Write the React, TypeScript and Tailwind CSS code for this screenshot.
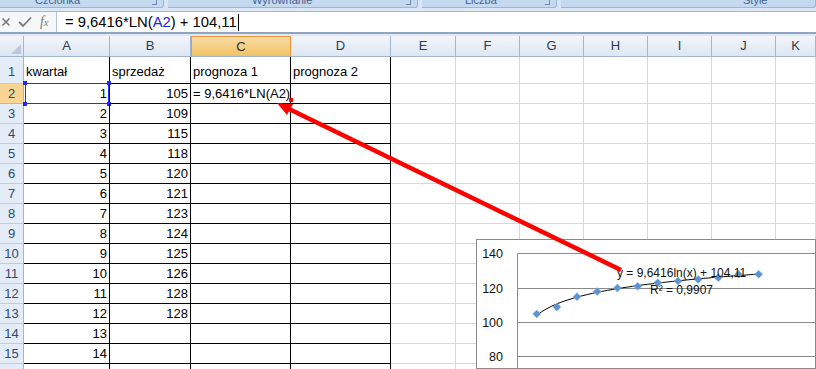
import React from 'react';

const ribbonGroups = [
  { label: 'Czcionka', width: 'w-[164px]', pad: 'pl-[35px]' },
  { label: 'Wyrównanie', width: 'w-[250px]', pad: 'pl-[84px]' },
  { label: 'Liczba', width: 'w-[135px]', pad: 'pl-[43px]' },
  { label: 'Style', width: 'flex-1', pad: 'pl-[182px]' },
];

const columns = [
  { label: 'A', width: 'w-[86px] shrink-0' },
  { label: 'B', width: 'w-[81px] shrink-0' },
  { label: 'C', width: 'w-[100px] shrink-0' },
  { label: 'D', width: 'w-[100px] shrink-0' },
  { label: 'E', width: 'w-[65px] shrink-0' },
  { label: 'F', width: 'w-[64px] shrink-0' },
  { label: 'G', width: 'w-[64px] shrink-0' },
  { label: 'H', width: 'w-[64px] shrink-0' },
  { label: 'I', width: 'w-[64px] shrink-0' },
  { label: 'J', width: 'w-[64px] shrink-0' },
  { label: 'K', width: 'flex-1 min-w-0' },
];

const sales = [105, 109, 115, 118, 120, 121, 123, 124, 125, 126, 128, 128];
const headers = ['kwartał', 'sprzedaż', 'prognoza 1', 'prognoza 2'];

// chart geometry (local to the svg inside the chart frame)
const px = (x: number) => 59.7 + (x - 1) * 20.18;
const py = (v: number) => 13.5 + (140 - v) * 1.725;

const trend = Array.from({ length: 45 }, (_, i) => 1 + i * 0.25)
  .map((x, i) => `${i === 0 ? 'M' : 'L'}${px(x).toFixed(1)},${py(9.6416 * Math.log(x) + 104.11).toFixed(1)}`)
  .join(' ');

const Chart = () => (
  <div className="absolute left-[476px] top-[239px] w-[340px] h-[130px] border border-[#8a8a8a] bg-white">
    <svg width="339" height="129" className="block font-['Liberation_Sans',sans-serif]">
      {[13.5, 48.5, 82.5, 116.5].map((y) => (
        <line key={y} x1="40.5" x2="339" y1={y} y2={y} stroke="#8a8a8a" strokeWidth="1" />
      ))}
      <line x1="40.5" x2="40.5" y1="13.5" y2="129" stroke="#8a8a8a" strokeWidth="1" />
      {['140', '120', '100', '80'].map((t, i) => (
        <text key={t} x="26" y={[18, 52.5, 87, 121][i]} fontSize="12.5" textAnchor="end" fill="#111">
          {t}
        </text>
      ))}
      <path d={trend} fill="none" stroke="#000" strokeWidth="1" />
      {sales.map((v, i) => {
        const x = px(i + 1);
        const y = py(v);
        return (
          <polygon
            key={i}
            points={`${x},${y - 4} ${x + 4},${y} ${x},${y + 4} ${x - 4},${y}`}
            fill="#5b93d3"
            stroke="#8bb3e2"
            strokeWidth="0.6"
          />
        );
      })}
      <text x="140" y="37" fontSize="12" fill="#111">
        y = 9,6416ln(x) + 104,11
      </text>
      <text x="173" y="53.5" fontSize="12" fill="#111">
        R² = 0,9907
      </text>
    </svg>
  </div>
);

const Arrow = () => (
  <svg width="816" height="369" className="absolute inset-0 pointer-events-none">
    <line x1="621" y1="270" x2="289" y2="109" stroke="#ff0000" strokeWidth="4.5" />
    <polygon points="277,103 293,104 287,115" fill="#ff0000" />
    <rect x="289" y="98" width="4" height="4" fill="#ff0000" />
  </svg>
);

const App = () => {
  const rows = Array.from({ length: 16 }, (_, i) => i + 1);

  return (
    <div className="relative w-[816px] h-[369px] overflow-hidden bg-white font-['Liberation_Sans',sans-serif]">
      {/* ribbon group labels, cut off at the top */}
      <div className="h-[8px] flex gap-[4px] bg-[#d9e5f4] overflow-hidden">
        {ribbonGroups.map((g) => (
          <div
            key={g.label}
            className={`${g.width} ${g.pad} h-full relative bg-[#c4d8f0] border-r border-b border-[#9db6d7] rounded-br-[3px] flex`}
          >
            <span className="text-[11px] leading-none text-[#45648f] -mt-[5px]">{g.label}</span>
            {g.label !== 'Style' && (
              <span className="absolute right-[6px] top-0 w-[5px] h-[5px] border-r border-b border-[#6f88ab]" />
            )}
          </div>
        ))}
      </div>
      <div className="h-[3px] bg-[#dce7f5]" />

      {/* formula bar */}
      <div className="h-[23px] flex border-t border-[#a7bad2] border-b-2 border-b-[#8fa4bf] bg-white">
        <div className="w-[57px] shrink-0 flex items-center border-r border-[#b7c5d6] bg-[#f6f7f9]">
          <svg width="10" height="10" className="ml-[1px]">
            <path d="M1.5 1.5 L8.5 8.5 M8.5 1.5 L1.5 8.5" stroke="#7a7a7a" strokeWidth="1.6" />
          </svg>
          <svg width="14" height="12" className="ml-[7px]">
            <path d="M1 6 L5 10 L13 1.5" fill="none" stroke="#7a7a7a" strokeWidth="1.8" />
          </svg>
          <span className="ml-[8px] text-[#7a7a7a] font-['Liberation_Serif',serif] italic text-[14px] leading-none">
            f<span className="text-[10px]">x</span>
          </span>
        </div>
        <div className="flex-1 flex items-center pl-[8px] text-[14.8px] text-black whitespace-nowrap">
          = 9,6416*LN(<span className="text-[#2323d6]">A2</span>) + 104,11
          <span className="ml-[1px] w-px h-[17px] bg-black" />
        </div>
      </div>
      <div className="h-[2px] bg-[#e1e9f5]" />

      {/* column headers */}
      <div className="h-[21px] flex">
        <div className="w-[24px] shrink-0 border-r border-b border-[#9eb6ce] bg-gradient-to-b from-[#f1f5fb] to-[#dce5f1] relative">
          <svg width="10" height="10" className="absolute right-[2px] bottom-[2px]">
            <polygon points="10,0 10,10 0,10" fill="#b9c8da" />
          </svg>
        </div>
        {columns.map((c) => (
          <div
            key={c.label}
            className={`${c.width} h-full flex items-center justify-center text-[13px] ${
              c.label === 'C'
                ? 'border-x border-t border-[#f29536] border-b border-b-[#9eb6ce] bg-gradient-to-b from-[#f9dca5] to-[#f1c262] text-[#2c2c2c]'
                : 'border-r border-b border-[#9eb6ce] bg-gradient-to-b from-[#f3f6fb] to-[#dde6f2] text-[#2f3b4d]'
            }`}
          >
            {c.label}
          </div>
        ))}
      </div>

      {/* sheet rows */}
      {rows.map((r) => (
        <div key={r} className={`flex ${r === 1 ? 'h-[27px]' : 'h-[20px]'}`}>
          <div
            className={`w-[24px] shrink-0 border-r border-r-[#9eb6ce] border-b flex justify-center text-[13px] text-[#2f4a70] ${
              r === 1 ? 'items-end pb-[2px]' : 'items-center'
            } ${r === 2 ? 'bg-[#f8d592] border-b-[#e7b25c]' : 'bg-[#e4ecf7] border-b-[#bccde1]'}`}
          >
            {r}
          </div>
          {columns.map((c, ci) => {
            const inTable = ci < 4;
            let content: React.ReactNode = null;
            let right = false;
            if (r === 1 && inTable) content = headers[ci];
            if (r >= 2 && r <= 15 && ci === 0) {
              content = r - 1;
              right = true;
            }
            if (r >= 2 && r <= 13 && ci === 1) {
              content = sales[r - 2];
              right = true;
            }
            if (r === 2 && ci === 2) content = '= 9,6416*LN(A2)';
            return (
              <div
                key={c.label}
                className={`${c.width} h-full relative border-r border-b ${
                  inTable ? 'border-black' : 'border-[#d0d7e5]'
                } flex px-[2px] text-[13px] text-black whitespace-nowrap ${
                  r === 1 ? 'items-end pb-[2px]' : 'items-center'
                } ${right ? 'justify-end' : 'justify-start'}`}
              >
                {content}
                {r === 2 && ci === 0 && (
                  <div className="absolute left-px right-0 -top-px -bottom-px border border-[#1f2bff]">
                    <span className="absolute -left-[3px] -top-[3px] w-[4px] h-[4px] bg-[#1f2bff]" />
                    <span className="absolute -right-[3px] -top-[3px] w-[4px] h-[4px] bg-[#1f2bff]" />
                    <span className="absolute -left-[3px] -bottom-[3px] w-[4px] h-[4px] bg-[#1f2bff]" />
                    <span className="absolute -right-[3px] -bottom-[3px] w-[4px] h-[4px] bg-[#1f2bff]" />
                  </div>
                )}
              </div>
            );
          })}
        </div>
      ))}

      <Chart />
      <Arrow />
    </div>
  );
};

export default App;
